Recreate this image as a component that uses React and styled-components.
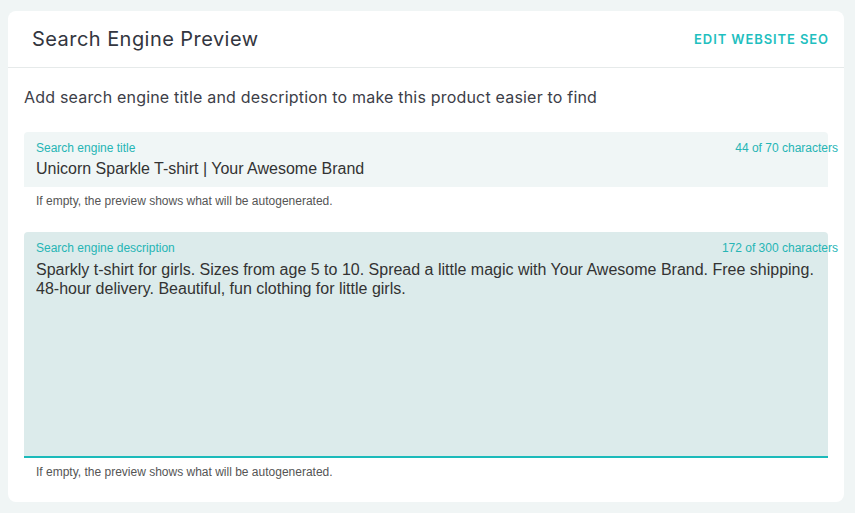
import styled, { createGlobalStyle } from "styled-components";

const GlobalStyle = createGlobalStyle`
  html, body {
    margin: 0;
    padding: 0;
    background: #f0f5f5;
  }
  body {
    font-family: Inter, "Noto Sans", sans-serif;
  }
`;

function Field({ label, counter, value, multiline }) {
  return (
    <FieldGroup>
      <FieldBox multiline={multiline}>
        <Label>{label}</Label>
        <Counter>{counter}</Counter>
        {multiline ? (
          <TextArea defaultValue={value} spellCheck={false} />
        ) : (
          <Input defaultValue={value} spellCheck={false} />
        )}
      </FieldBox>
      <Helper>If empty, the preview shows what will be autogenerated.</Helper>
    </FieldGroup>
  );
}

function App() {
  return (
    <Page>
      <GlobalStyle />
      <Card>
        <Header>
          <Title>Search Engine Preview</Title>
          <EditLink href="#">EDIT WEBSITE SEO</EditLink>
        </Header>
        <Body>
          <Intro>
            Add search engine title and description to make this product
            easier to find
          </Intro>
          <Field
            label="Search engine title"
            counter="44 of 70 characters"
            value="Unicorn Sparkle T-shirt | Your Awesome Brand"
          />
          <Field
            multiline
            label="Search engine description"
            counter="172 of 300 characters"
            value="Sparkly t-shirt for girls. Sizes from age 5 to 10. Spread a little magic with Your Awesome Brand. Free shipping. 48-hour delivery. Beautiful, fun clothing for little girls."
          />
        </Body>
      </Card>
    </Page>
  );
}

export default App;

const Page = styled.div`
  padding: 11px 11px 11px 8px;
`;

const Card = styled.section`
  background: #ffffff;
  border-radius: 8px;
  height: 491px;
  box-sizing: border-box;
`;

const Header = styled.header`
  height: 56px;
  border-bottom: 1px solid #e6eaea;
  display: flex;
  align-items: center;
  justify-content: space-between;
  padding: 0 16px 0 24px;
`;

const Title = styled.h2`
  margin: 0;
  font-weight: 400;
  font-size: 20px;
  letter-spacing: 0.45px;
  color: #333640;
`;

const EditLink = styled.a`
  font-size: 13px;
  font-weight: 600;
  letter-spacing: 0.9px;
  margin-right: -1px;
  color: #1fbfbf;
  text-decoration: none;
`;

const Body = styled.div`
  padding: 19px 16px 0 16px;
`;

const Intro = styled.p`
  margin: 0 0 25px;
  font-size: 16px;
  line-height: 20px;
  letter-spacing: 0.19px;
  color: #3c3e48;
`;

const FieldGroup = styled.div`
  margin-bottom: 24px;
`;

const FieldBox = styled.div`
  position: relative;
  display: flex;
  flex-direction: column;
  background: ${(p) => (p.multiline ? "#dcebeb" : "#f0f6f6")};
  border-radius: 4px 4px 0 0;
  padding: ${(p) => (p.multiline ? "9px 12px 0" : "9px 12px 9px")};
  height: ${(p) => (p.multiline ? "226px" : "auto")};
  box-sizing: border-box;
  border-bottom: ${(p) => (p.multiline ? "2px solid #1bbaba" : "none")};
  font-family: "Liberation Sans", Arial, sans-serif;
`;

const Label = styled.span`
  font-size: 12px;
  line-height: 14px;
  color: #26b5b5;
`;

const Counter = styled.span`
  position: absolute;
  top: 9px;
  right: -10px;
  font-size: 12px;
  line-height: 14px;
  color: #26b5b5;
`;

const Input = styled.input`
  border: none;
  background: transparent;
  padding: 0;
  margin-top: 4px;
  font-family: inherit;
  font-size: 16px;
  line-height: 19px;
  height: 19px;
  color: #333;
  outline: none;
`;

const TextArea = styled.textarea`
  flex: 1;
  border: none;
  background: transparent;
  padding: 0;
  margin-top: 5px;
  font-family: inherit;
  font-size: 16px;
  line-height: 19px;
  color: #333;
  outline: none;
  resize: none;
`;

const Helper = styled.p`
  margin: 7px 0 0 12px;
  font-family: "Liberation Sans", Arial, sans-serif;
  font-size: 12px;
  line-height: 14px;
  color: #555;
`;
